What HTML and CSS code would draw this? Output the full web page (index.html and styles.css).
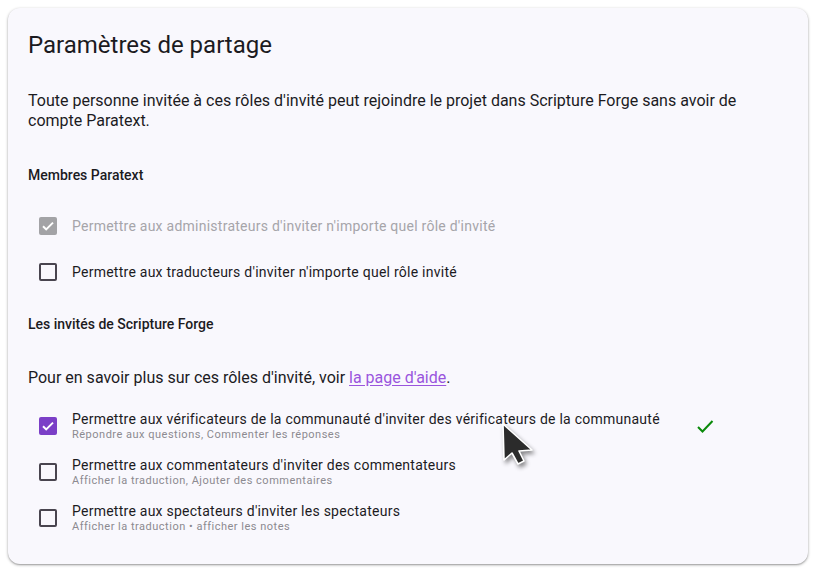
FILE: index.html
```html
<!DOCTYPE html>
<html lang="fr">
<head>
<meta charset="utf-8">
<title>Paramètres de partage</title>
<link rel="stylesheet" href="styles.css">
</head>
<body>
<div class="card">
  <h1 class="title">Paramètres de partage</h1>
  <p class="intro">Toute personne invitée à ces rôles d'invité peut rejoindre le projet dans Scripture Forge sans avoir de compte Paratext.</p>

  <h2 class="section">Membres Paratext</h2>
  <div class="rows rows-pt">
    <div class="row disabled">
      <span class="cb-wrap"><span class="cb checked grey"><svg viewBox="0 0 18 18"><path d="M4 9.2l3.2 3.2L14 5.6" fill="none" stroke="#fff" stroke-width="2"/></svg></span></span>
      <span class="label">Permettre aux administrateurs d'inviter n'importe quel rôle d'invité</span>
    </div>
    <div class="row">
      <span class="cb-wrap"><span class="cb"></span></span>
      <span class="label">Permettre aux traducteurs d'inviter n'importe quel rôle invité</span>
    </div>
  </div>

  <h2 class="section section-sf">Les invités de Scripture Forge</h2>
  <p class="help">Pour en savoir plus sur ces rôles d'invité, voir <a href="#">la page d'aide</a>.</p>

  <div class="rows rows-sf">
    <div class="row two">
      <span class="cb-wrap"><span class="cb checked purple"><svg viewBox="0 0 18 18"><path d="M4 9.2l3.2 3.2L14 5.6" fill="none" stroke="#fff" stroke-width="2"/></svg></span></span>
      <span class="label-col">
        <span class="label">Permettre aux vérificateurs de la communauté d'inviter des vérificateurs de la communauté</span>
        <span class="sub">Répondre aux questions, Commenter les réponses</span>
      </span>
      <svg class="ok" viewBox="0 0 24 24"><path d="M5 13l4.5 4.5L19.5 7" fill="none" stroke="#0a8a0a" stroke-width="2"/></svg>
    </div>
    <div class="row two">
      <span class="cb-wrap"><span class="cb"></span></span>
      <span class="label-col">
        <span class="label">Permettre aux commentateurs d'inviter des commentateurs</span>
        <span class="sub">Afficher la traduction, Ajouter des commentaires</span>
      </span>
    </div>
    <div class="row two">
      <span class="cb-wrap"><span class="cb"></span></span>
      <span class="label-col">
        <span class="label">Permettre aux spectateurs d'inviter les spectateurs</span>
        <span class="sub">Afficher la traduction • afficher les notes</span>
      </span>
    </div>
  </div>
</div>
<svg class="cursor" viewBox="0 0 34 46" width="34" height="46">
  <path d="M2 2 L3 38 L11 31 L17 42 L23 39 L18 29 L31 28 Z" fill="#2b2b2b" stroke="#fff" stroke-width="1.6" stroke-linejoin="round"/>
</svg>
</body>
</html>
```
FILE: styles.css
```css
* { box-sizing: border-box; }
html, body { margin: 0; padding: 0; background: #fff; }
body {
  padding: 8px;
  font-family: Roboto, "Noto Sans", sans-serif;
  color: #1c1b1f;
}
.card {
  width: 800px;
  height: 556px;
  background: #f9f8fd;
  border-radius: 12px;
  box-shadow: 0 1px 3px rgba(0,0,0,0.35), 0 1px 1px rgba(0,0,0,0.12);
  padding: 21px 20px 0 20px;
}
.title {
  margin: 0;
  font-size: 24px;
  font-weight: 400;
  line-height: 32px;
  color: #1c1b1f;
}
.intro {
  margin: 30px 0 0 0;
  font-size: 16px;
  line-height: 20px;
}
.section {
  margin: 34px 0 0 0;
  font-size: 14px;
  font-weight: 500;
  line-height: 20px;
}
.section-sf { margin-top: 22px; }
.help {
  margin: 34px 0 0 0;
  font-size: 16px;
  line-height: 20px;
}
.help a { color: #9a55dd; text-decoration: underline; text-underline-offset: 2px; }
.rows { display: flex; flex-direction: column; gap: 6px; }
.rows-pt { margin-top: 21px; }
.rows-sf { margin-top: 18px; }
.row {
  display: grid;
  grid-template-columns: 40px 617px 24px;
  column-gap: 4px;
  align-items: center;
  height: 40px;
}
.cb-wrap {
  width: 40px; height: 40px;
  display: flex; align-items: center; justify-content: center;
}
.cb {
  width: 18px; height: 18px;
  border: 2px solid #49454f;
  border-radius: 2px;
  display: block;
}
.cb.checked { border: none; }
.cb.checked svg { width: 18px; height: 18px; display: block; }
.cb.grey { background: #a3a3a6; }
.cb.purple { background: #7b3fc7; }
.label {
  font-size: 14px;
  line-height: 18px;
  letter-spacing: 0.25px;
  color: #1c1b1f;
}
.disabled .label { color: #a6a5aa; }
.label-col { display: flex; flex-direction: column; padding-top: 1px; }
.label-col .label { line-height: 16px; }
.sub {
  font-size: 11px;
  line-height: 16px;
  letter-spacing: 0.5px;
  color: #8c8a90;
}
.ok { width: 24px; height: 24px; display: block; }
.cursor {
  position: absolute;
  left: 501px;
  top: 422px;
  filter: drop-shadow(2px 3px 2px rgba(0,0,0,0.45));
}
```
